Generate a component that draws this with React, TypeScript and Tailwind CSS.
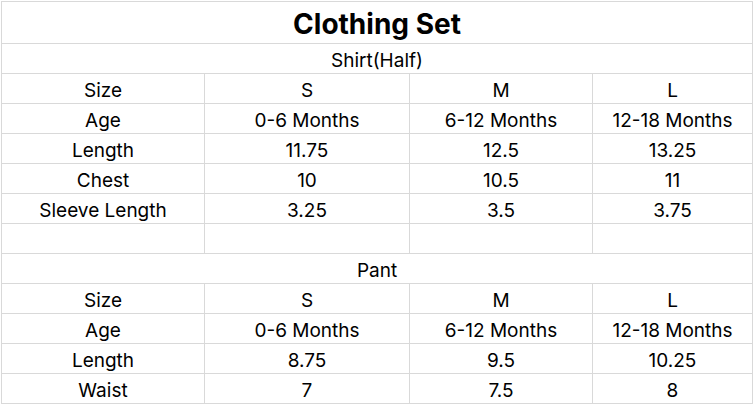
const cols = ['w-[203px]', 'w-[205px]', 'w-[183px]', 'w-[160px]'];

const shirt = [
  ['Size', 'S', 'M', 'L'],
  ['Age', '0-6 Months', '6-12 Months', '12-18 Months'],
  ['Length', '11.75', '12.5', '13.25'],
  ['Chest', '10', '10.5', '11'],
  ['Sleeve Length', '3.25', '3.5', '3.75'],
  ['', '', '', ''],
];

const pant = [
  ['Size', 'S', 'M', 'L'],
  ['Age', '0-6 Months', '6-12 Months', '12-18 Months'],
  ['Length', '8.75', '9.5', '10.25'],
  ['Waist', '7', '7.5', '8'],
];

const Row = ({ cells }: { cells: string[] }) => (
  <div className="flex h-[30px]">
    {cells.map((c, i) => (
      <div
        key={i}
        className={`${cols[i]} flex items-center justify-center border-r border-b border-[#d9d9d9] pt-[3px] whitespace-nowrap`}
      >
        {c}
      </div>
    ))}
  </div>
);

const Banner = ({ label }: { label: string }) => (
  <div className="flex h-[30px] items-center justify-center border-r border-b border-[#d9d9d9] pt-[3px]">
    {label}
  </div>
);

export default function App() {
  return (
    <div className="w-[754px] h-[404px] bg-white overflow-hidden">
      <div
        className="ml-px mt-px w-[752px] border-l border-t border-[#d9d9d9] text-[19px] leading-none text-black"
        style={{ fontFamily: 'Inter, "Noto Sans", sans-serif' }}
      >
        <div className="flex h-[42px] items-center justify-center border-r border-b border-[#d9d9d9] pt-[2px] text-[28px] font-bold">
          Clothing Set
        </div>
        <Banner label="Shirt(Half)" />
        {shirt.map((r, i) => (
          <Row key={'s' + i} cells={r} />
        ))}
        <Banner label="Pant" />
        {pant.map((r, i) => (
          <Row key={'p' + i} cells={r} />
        ))}
      </div>
    </div>
  );
}
